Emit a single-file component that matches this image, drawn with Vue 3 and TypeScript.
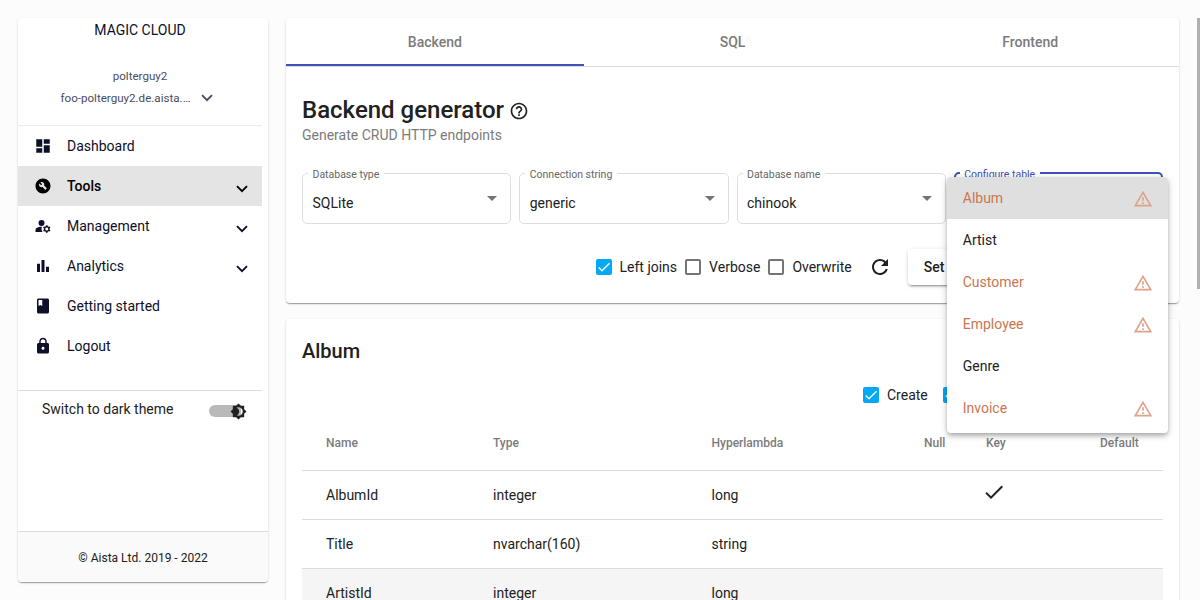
<script setup lang="ts">
interface NavItem {
  label: string
  icon: string
  expandable?: boolean
  active?: boolean
}

interface Column {
  name: string
  type: string
  hyperlambda: string
  key?: boolean
}

const nav: NavItem[] = [
  { label: 'Dashboard', icon: 'M3 13h8V3H3v10zm0 8h8v-6H3v6zm10 0h8V11h-8v10zm0-18v6h8V3h-8z' },
  {
    label: 'Tools',
    icon: 'M12 2C6.48 2 2 6.48 2 12s4.48 10 10 10 10-4.48 10-10S17.52 2 12 2zm4.9 13.49l-1.4 1.4c-.2.2-.51.2-.71 0l-3.41-3.41c-1.22.43-2.64.17-3.62-.81-1.11-1.11-1.3-2.79-.59-4.1l2.35 2.35 1.41-1.41-2.35-2.34c1.32-.71 2.99-.52 4.1.59.98.98 1.24 2.4.81 3.62l3.41 3.41c.19.19.19.51 0 .7z',
    expandable: true,
    active: true,
  },
  {
    label: 'Management',
    icon: 'M10 4a4 4 0 1 0 0 8 4 4 0 0 0 0-8zM10.67 13.02C10.45 13.01 10.23 13 10 13c-2.42 0-4.68.67-6.61 1.82-.88.52-1.39 1.5-1.39 2.53V20h9.26c-.79-1.13-1.26-2.51-1.26-4 0-1.07.25-2.07.67-2.98zM20.75 16c0-.22-.03-.42-.06-.63l1.14-1.01-1-1.73-1.45.49c-.32-.27-.68-.48-1.08-.63L18 11h-2l-.3 1.49c-.4.15-.76.36-1.08.63l-1.45-.49-1 1.73 1.14 1.01c-.03.21-.06.41-.06.63s.03.42.06.63l-1.14 1.01 1 1.73 1.45-.49c.32.27.68.48 1.08.63L16 21h2l.3-1.49c.4-.15.76-.36 1.08-.63l1.45.49 1-1.73-1.14-1.01c.03-.21.06-.41.06-.63zM17 18c-1.1 0-2-.9-2-2s.9-2 2-2 2 .9 2 2-.9 2-2 2z',
    expandable: true,
  },
  { label: 'Analytics', icon: 'M4 9h4v11H4zM16 13h4v7h-4zM10 4h4v16h-4z', expandable: true },
  {
    label: 'Getting started',
    icon: 'M18 2H6c-1.1 0-2 .9-2 2v16c0 1.1.9 2 2 2h12c1.1 0 2-.9 2-2V4c0-1.1-.9-2-2-2zM6 4h5v8l-2.5-1.5L6 12V4z',
  },
  {
    label: 'Logout',
    icon: 'M18 8h-1V6c0-2.76-2.24-5-5-5S7 3.24 7 6v2H6c-1.1 0-2 .9-2 2v10c0 1.1.9 2 2 2h12c1.1 0 2-.9 2-2V10c0-1.1-.9-2-2-2zm-6 9c-1.1 0-2-.9-2-2s.9-2 2-2 2 .9 2 2-.9 2-2 2zm3.1-9H8.9V6c0-1.71 1.39-3.1 3.1-3.1 1.71 0 3.1 1.39 3.1 3.1v2z',
  },
]

const tabs = ['Backend', 'SQL', 'Frontend']

const fields = [
  { label: 'Database type', value: 'SQLite' },
  { label: 'Connection string', value: 'generic' },
  { label: 'Database name', value: 'chinook' },
]

const options = [
  { label: 'Left joins', checked: true },
  { label: 'Verbose', checked: false },
  { label: 'Overwrite', checked: false },
]

const tables = [
  { name: 'Album', warn: true, selected: true },
  { name: 'Artist', warn: false },
  { name: 'Customer', warn: true },
  { name: 'Employee', warn: true },
  { name: 'Genre', warn: false },
  { name: 'Invoice', warn: true },
]

const columns: Column[] = [
  { name: 'AlbumId', type: 'integer', hyperlambda: 'long', key: true },
  { name: 'Title', type: 'nvarchar(160)', hyperlambda: 'string' },
  { name: 'ArtistId', type: 'integer', hyperlambda: 'long' },
]
</script>

<template>
  <div class="app">
    <aside class="sidebar">
      <div class="side-body">
        <div class="brand">MAGIC CLOUD</div>
        <div class="user">polterguy2</div>
        <div class="backend">
          <span>foo-polterguy2.de.aista.…</span>
          <svg class="chev" viewBox="0 0 12 8"><path d="M1 1.2l5 5 5-5" /></svg>
        </div>
        <nav class="nav">
          <div v-for="n in nav" :key="n.label" class="nav-item" :class="{ active: n.active }">
            <svg class="nav-icon" viewBox="0 0 24 24"><path fill-rule="evenodd" :d="n.icon" /></svg>
            <span class="nav-label">{{ n.label }}</span>
            <svg v-if="n.expandable" class="chev nav-chev" viewBox="0 0 12 8"><path d="M1 1.2l5 5 5-5" /></svg>
          </div>
        </nav>
        <div class="theme">
          <span>Switch to dark theme</span>
          <div class="toggle">
            <svg class="thumb" viewBox="0 0 24 24">
              <path d="M20 8.69V4h-4.69L12 .69 8.69 4H4v4.69L.69 12 4 15.31V20h4.69L12 23.31 15.31 20H20v-4.69L23.31 12 20 8.69zM12 18c-.89 0-1.74-.2-2.5-.55C11.56 16.5 13 14.42 13 12s-1.44-4.5-3.5-5.45C10.26 6.2 11.11 6 12 6c3.31 0 6 2.69 6 6s-2.69 6-6 6z" />
            </svg>
          </div>
        </div>
      </div>
      <footer class="side-foot">© Aista Ltd. 2019 - 2022</footer>
    </aside>

    <main class="main">
      <section class="card generator">
        <div class="tabs">
          <div v-for="(t, i) in tabs" :key="t" class="tab" :class="{ current: i === 0 }">{{ t }}</div>
        </div>
        <div class="gen-body">
          <div class="title-row">
            <h1>Backend generator</h1>
            <svg class="help" viewBox="0 0 24 24">
              <path d="M11 18h2v-2h-2v2zm1-16C6.48 2 2 6.48 2 12s4.48 10 10 10 10-4.48 10-10S17.52 2 12 2zm0 18c-4.41 0-8-3.59-8-8s3.59-8 8-8 8 3.59 8 8-3.59 8-8 8zm0-14c-2.21 0-4 1.79-4 4h2c0-1.1.9-2 2-2s2 .9 2 2c0 2-3 1.75-3 5h2c0-2.25 3-2.5 3-5 0-2.21-1.79-4-4-4z" />
            </svg>
          </div>
          <div class="subtitle">Generate CRUD HTTP endpoints</div>
          <div class="fields">
            <fieldset v-for="f in fields" :key="f.label" class="field">
              <legend>{{ f.label }}</legend>
              <div class="field-row">
                <span>{{ f.value }}</span>
                <i class="caret"></i>
              </div>
            </fieldset>
            <div class="field-wrap">
              <fieldset class="field focused">
                <legend>Configure table</legend>
              </fieldset>
              <div class="menu">
                <div v-for="t in tables" :key="t.name" class="option" :class="{ warn: t.warn, selected: t.selected }">
                  <span>{{ t.name }}</span>
                  <svg v-if="t.warn" class="warn-icon" viewBox="0 0 24 24">
                    <path d="M12 5.99L19.53 19H4.47L12 5.99M12 2L1 21h22L12 2zm1 14h-2v2h2v-2zm0-6h-2v4h2v-4z" />
                  </svg>
                </div>
              </div>
            </div>
          </div>
          <div class="actions">
            <label v-for="o in options" :key="o.label" class="check">
              <span class="box" :class="{ on: o.checked }">
                <svg v-if="o.checked" viewBox="0 0 24 24"><path d="M4.1 12.7L9 17.6 20.3 6.3" /></svg>
              </span>
              <span>{{ o.label }}</span>
            </label>
            <svg class="refresh" viewBox="0 0 24 24">
              <path d="M17.65 6.35C16.2 4.9 14.21 4 12 4c-4.42 0-7.99 3.58-7.99 8s3.57 8 7.99 8c3.73 0 6.84-2.55 7.73-6h-2.08c-.82 2.33-3.04 4-5.65 4-3.31 0-6-2.69-6-6s2.69-6 6-6c1.66 0 3.14.69 4.22 1.78L13 11h7V4l-2.35 2.35z" />
            </svg>
            <div class="set-btn">Set</div>
          </div>
        </div>
      </section>

      <section class="card album">
        <h2>Album</h2>
        <div class="verbs">
          <label class="check">
            <span class="box on"><svg viewBox="0 0 24 24"><path d="M4.1 12.7L9 17.6 20.3 6.3" /></svg></span>
            <span>Create</span>
          </label>
          <span class="box on"><svg viewBox="0 0 24 24"><path d="M4.1 12.7L9 17.6 20.3 6.3" /></svg></span>
        </div>
        <div class="table">
          <div class="tr head">
            <span>Name</span><span>Type</span><span>Hyperlambda</span><span>Null</span><span>Key</span><span>Default</span>
          </div>
          <div v-for="(c, i) in columns" :key="c.name" class="tr" :class="{ hover: i === 2 }">
            <span>{{ c.name }}</span>
            <span>{{ c.type }}</span>
            <span>{{ c.hyperlambda }}</span>
            <span></span>
            <span class="key">
              <svg v-if="c.key" viewBox="0 0 24 24"><path d="M9 16.2L4.8 12l-1.4 1.4L9 19 21 7l-1.4-1.4L9 16.2z" /></svg>
            </span>
            <span></span>
          </div>
        </div>
      </section>
    </main>
    <div class="scrollbar"></div>
  </div>
</template>

<style>
html,
body {
  margin: 0;
  overflow: hidden;
  background: #fcfcfc;
}
</style>

<style scoped>
* {
  box-sizing: border-box;
}
.app {
  display: flex;
  height: 600px;
  padding: 18px 0 0 18px;
  overflow: hidden;
  font: 400 14px/20px Roboto, sans-serif;
  color: #212121;
}
.sidebar {
  display: flex;
  flex-direction: column;
  flex: none;
  width: 250px;
  height: 564px;
  background: #fff;
  border-radius: 4px;
  overflow: hidden;
  box-shadow: 0 2px 1px -1px rgba(0, 0, 0, 0.2), 0 1px 1px rgba(0, 0, 0, 0.14), 0 1px 3px rgba(0, 0, 0, 0.12);
}
.side-body {
  flex: 1;
  width: 244px;
}
.brand {
  margin-top: 2px;
  height: 20px;
  text-align: center;
  color: #0d1028;
}
.user {
  margin-top: 26px;
  height: 20px;
  text-align: center;
  font-size: 11.6px;
  color: #4a4c5e;
}
.backend {
  display: flex;
  align-items: center;
  margin: 2px 0 0 42.5px;
  height: 20px;
  gap: 11px;
  font-size: 11.6px;
  color: #4a4c5e;
}
.chev {
  width: 12px;
  height: 8px;
  fill: none;
  stroke: currentColor;
  stroke-width: 1.9;
}
.nav {
  margin-top: 17px;
  padding-bottom: 24px;
  border-top: 1px solid #ececec;
  border-bottom: 1px solid #dcdcdc;
}
.nav-item {
  display: flex;
  align-items: center;
  height: 40px;
  padding: 0 14px 0 16px;
  color: #0d1028;
}
.nav-item.active {
  background: #e4e4e4;
  color: #000;
  font-weight: 500;
}
.nav-icon {
  width: 18px;
  height: 18px;
  margin-right: 15px;
  fill: currentColor;
}
.nav-label {
  flex: 1;
}
.nav-chev {
  margin-top: 6px;
}
.theme {
  display: flex;
  align-items: center;
  justify-content: space-between;
  height: 36px;
  padding: 0 15px 0 24px;
}
.toggle {
  display: flex;
  align-items: center;
  justify-content: flex-end;
  width: 38px;
  height: 12px;
  margin-top: 4px;
  background: linear-gradient(#b9b9b9, #b9b9b9) 0 0 / 32px 12px no-repeat;
  border-radius: 6px;
}
.thumb {
  flex: none;
  width: 17px;
  height: 17px;
  fill: #212121;
}
.side-foot {
  height: 51px;
  border-top: 1px solid #dcdcdc;
  background: #fafafa;
  line-height: 53px;
  text-align: center;
  font-size: 12px;
}
.main {
  flex: none;
  display: flex;
  flex-direction: column;
  gap: 16px;
  width: 893px;
  margin-left: 18px;
}
.card {
  flex: none;
  background: #fff;
  border-radius: 4px;
  box-shadow: 0 2px 1px -1px rgba(0, 0, 0, 0.2), 0 1px 1px rgba(0, 0, 0, 0.14), 0 1px 3px rgba(0, 0, 0, 0.12);
}
.generator {
  height: 285px;
}
.tabs {
  display: flex;
  height: 49px;
  border-bottom: 1px solid #dcdcdc;
}
.tab {
  flex: 1;
  line-height: 48px;
  text-align: center;
  font-weight: 500;
  color: #7b7b7b;
}
.tab.current {
  border-bottom: 2px solid #3f51b5;
}
.gen-body {
  padding: 27px 16px 0;
}
.title-row {
  display: flex;
  align-items: center;
  gap: 5px;
  height: 32px;
}
h1 {
  margin: 0;
  font-size: 24px;
  line-height: 32px;
  font-weight: 500;
}
.help {
  width: 20px;
  height: 20px;
  margin-top: 2px;
  fill: #212121;
}
.subtitle {
  margin-top: -1px;
  color: #7b7b7b;
}
.fields {
  display: grid;
  grid-template-columns: repeat(4, 1fr);
  gap: 8px;
  margin-top: 22px;
}
.field {
  min-width: 0;
  height: 57px;
  margin: 0;
  padding: 0 5px;
  border: 1px solid #dedede;
  border-radius: 5px;
}
.field legend {
  height: 12px;
  padding: 0 5px 0 4.5px;
  font-size: 10.5px;
  line-height: 16px;
  color: #666;
}
.field-row {
  display: flex;
  justify-content: space-between;
  padding: 14px 8px 0 4.5px;
}
.caret {
  margin-top: 3px;
  width: 0;
  height: 0;
  border: 5px solid transparent;
  border-top-color: #757575;
}
.field-wrap {
  position: relative;
}
.field.focused {
  padding: 0 4px;
  border: 2px solid #3f51b5;
}
.focused legend {
  color: #3f51b5;
}
.menu {
  position: absolute;
  z-index: 2;
  left: -7px;
  top: 10px;
  width: 221.5px;
  height: 256px;
  background: #fff;
  border-radius: 4px;
  overflow: hidden;
  box-shadow: 0 2px 4px -1px rgba(0, 0, 0, 0.2), 0 4px 5px rgba(0, 0, 0, 0.14), 0 1px 10px rgba(0, 0, 0, 0.12);
}
.option {
  display: flex;
  align-items: center;
  justify-content: space-between;
  height: 42px;
  padding: 0 15.5px 0 16px;
}
.option.warn {
  color: #cb7650;
}
.option.selected {
  background: #dfdfdf;
}
.warn-icon {
  width: 20px;
  height: 20px;
  margin-top: 2px;
  fill: #dda38a;
}
.actions {
  display: flex;
  align-items: center;
  height: 36px;
  margin-top: 25px;
  padding-left: 293.5px;
}
.check {
  display: flex;
  align-items: center;
  gap: 8px;
  margin-right: 8px;
}
.box {
  flex: none;
  width: 16px;
  height: 16px;
  border: 2px solid #757575;
  border-radius: 2px;
}
.box.on {
  border: 0;
  background: #03a9f4;
}
.box svg {
  display: block;
  width: 16px;
  height: 16px;
  fill: none;
  stroke: #fff;
  stroke-width: 2;
}
.refresh {
  width: 24px;
  height: 24px;
  margin-left: 8px;
  fill: #212121;
}
.set-btn {
  width: 120px;
  height: 36px;
  margin-left: 16px;
  padding-left: 16px;
  border-radius: 4px;
  line-height: 36px;
  font-weight: 500;
  box-shadow: 0 3px 1px -2px rgba(0, 0, 0, 0.2), 0 2px 2px rgba(0, 0, 0, 0.14), 0 1px 5px rgba(0, 0, 0, 0.12);
}
.album {
  height: 400px;
  padding: 16px 16px 0;
}
h2 {
  margin: 0;
  font-size: 20px;
  line-height: 32px;
  font-weight: 500;
}
.verbs {
  display: flex;
  align-items: center;
  height: 20px;
  margin-top: 18px;
  padding-left: 561px;
}
.verbs .check {
  margin-right: 15.5px;
}
.table {
  margin-top: 9px;
}
.tr {
  display: grid;
  grid-template-columns: 167px 218.5px 212.5px 62px 114px 63px;
  align-items: center;
  height: 49px;
  padding-left: 24px;
  border-bottom: 1px solid #dcdcdc;
}
.tr.head {
  height: 57px;
  padding-top: 1px;
  font-size: 12px;
  font-weight: 500;
  color: #7b7b7b;
}
.tr.hover {
  background: #f5f5f5;
}
.key svg {
  display: block;
  width: 24px;
  height: 24px;
  margin: -6px 0 0 -4px;
  fill: #212121;
}
.scrollbar {
  width: 3px;
  height: 271px;
  margin-left: auto;
  background: #b0b0b0;
}
</style>
